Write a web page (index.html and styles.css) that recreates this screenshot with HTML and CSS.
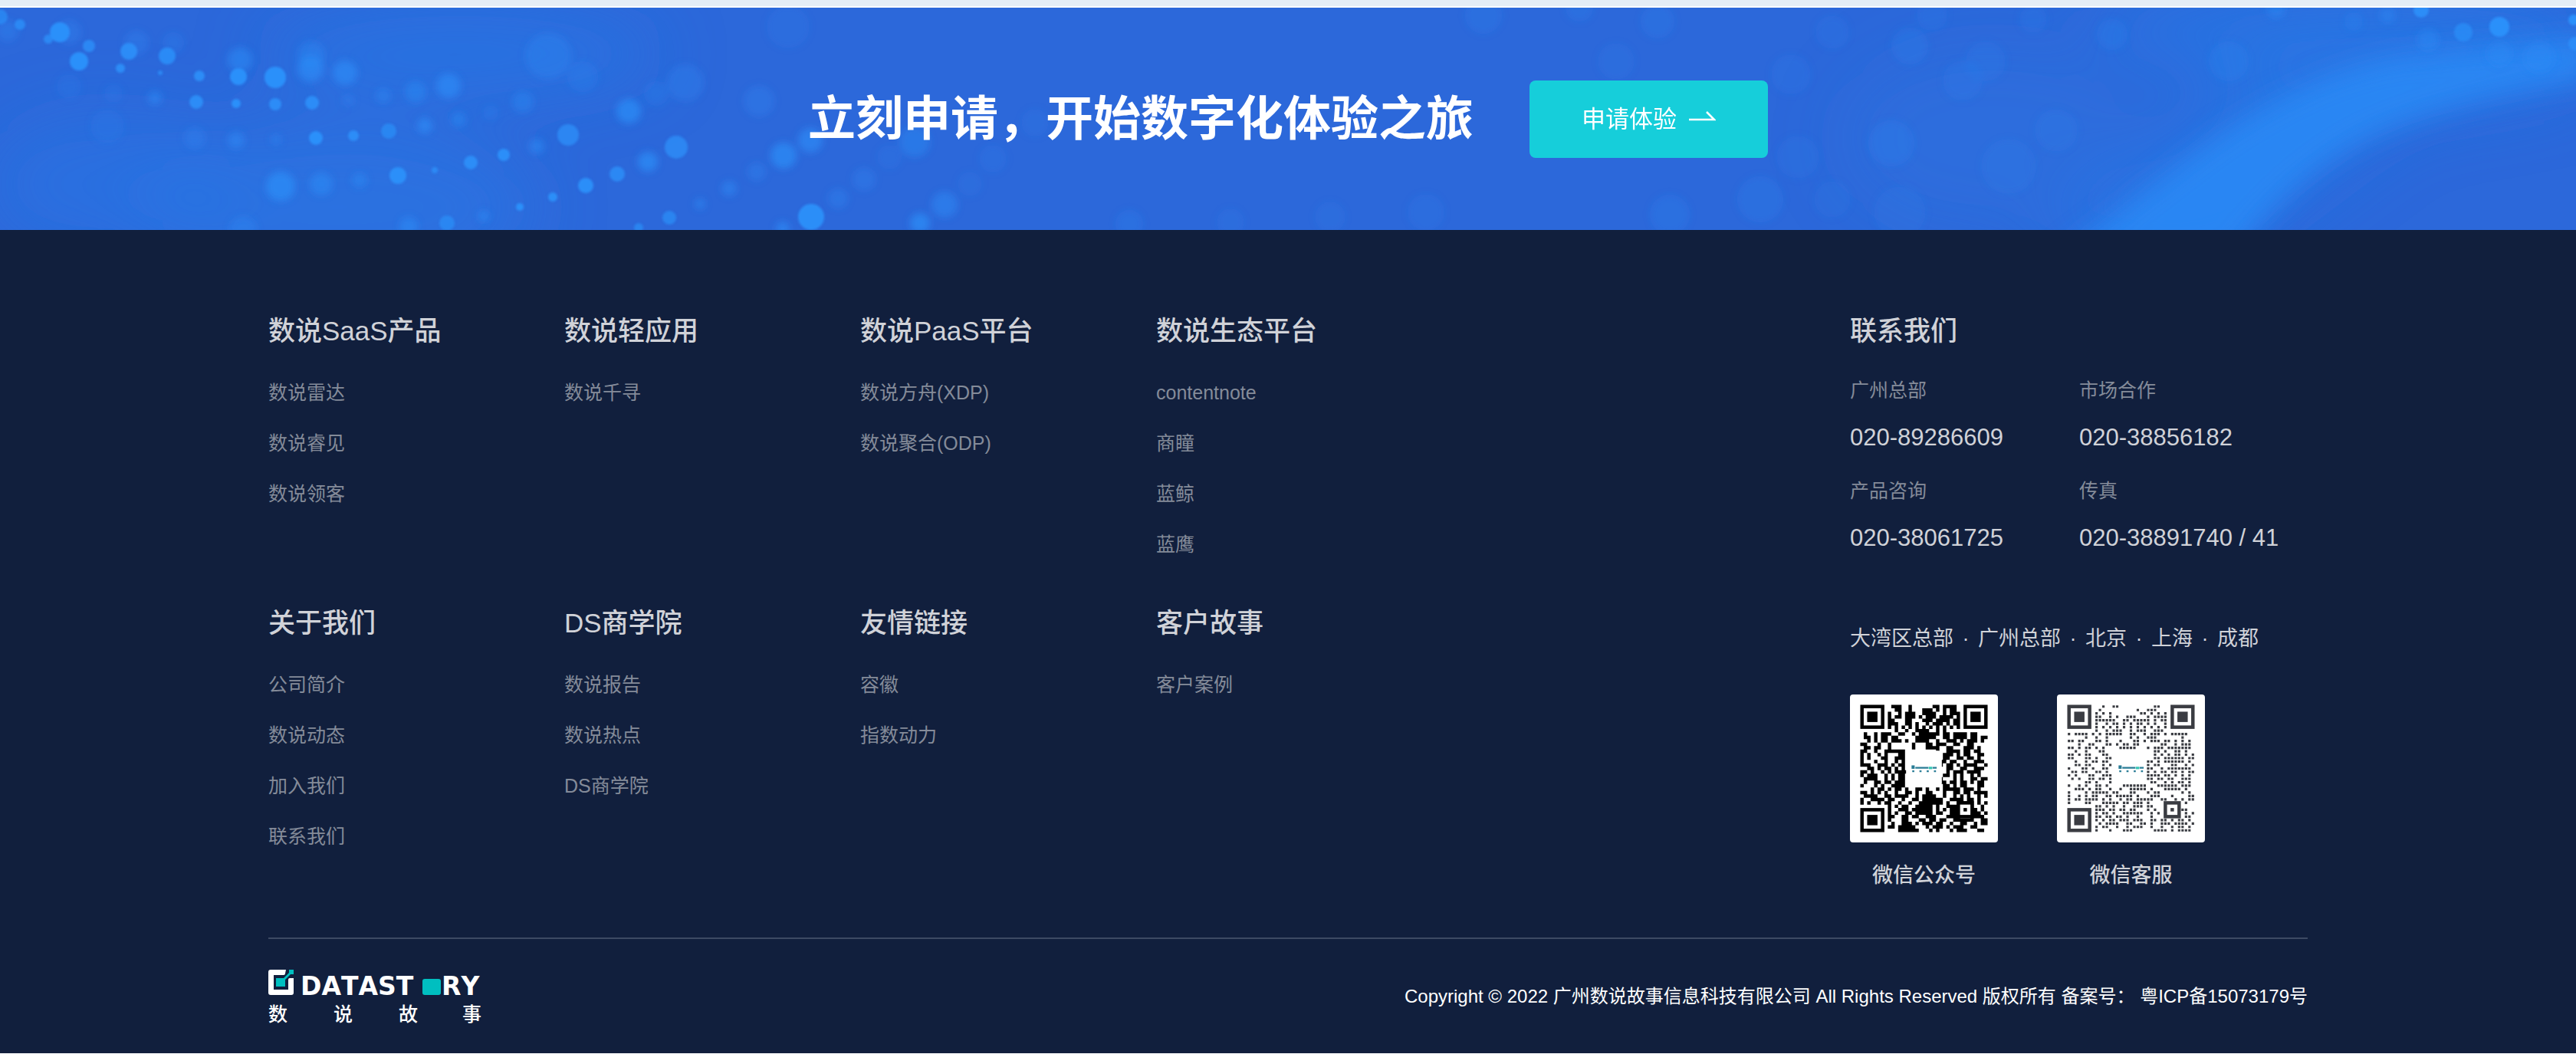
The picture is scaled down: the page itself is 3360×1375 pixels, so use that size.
FILE: index.html
```
<!DOCTYPE html>
<html lang="zh-CN">
<head>
<meta charset="utf-8">
<title>数说故事</title>
<link rel="stylesheet" href="styles.css">
</head>
<body>
<div class="section-edge"></div>
<section class="banner">
  <svg class="banner-art" viewBox="0 10 3360 290" preserveAspectRatio="xMidYMid slice" aria-hidden="true">
    <defs>
      <filter id="soft" x="-30%" y="-30%" width="160%" height="160%"><feGaussianBlur stdDeviation="1.5"/></filter>
      <filter id="blurry" x="-30%" y="-30%" width="160%" height="160%"><feGaussianBlur stdDeviation="5"/></filter>
      <filter id="haze" x="-20%" y="-50%" width="140%" height="200%"><feGaussianBlur stdDeviation="18"/></filter>
      <filter id="glow" x="-20%" y="-50%" width="140%" height="200%"><feGaussianBlur stdDeviation="45"/></filter>
    </defs>
    <g filter="url(#glow)" fill="#2a7ae8">
      <ellipse cx="600" cy="70" rx="260" ry="50" opacity=".6"/>
      <ellipse cx="440" cy="270" rx="260" ry="110" opacity=".5"/>
      <ellipse cx="140" cy="240" rx="160" ry="90" opacity=".4"/>
      <ellipse cx="3060" cy="40" rx="330" ry="60" opacity=".6"/>
      <ellipse cx="2600" cy="180" rx="200" ry="120" opacity=".25"/>
      <path d="M2640 330L2960 60L3360 40V110L3140 150L2900 330Z" opacity=".6"/>
    </g>
    <path d="M2680 340L2860 200Q3000 95 3130 72L3380 48V104Q3200 130 3090 180Q2990 230 2910 340Z" fill="#2b8af6" opacity=".85" filter="url(#haze)"/>
    <g id="dots-far" fill="#2b90fa" filter="url(#blurry)"></g>
    <g id="dots-near" fill="#2b90fa" filter="url(#soft)"></g>
  </svg>
  <div class="banner-content">
    <h2 class="banner-title">立刻申请，开始数字化体验之旅</h2>
    <button class="banner-button" type="button">申请体验
      <svg width="35" height="14" viewBox="0 0 35 14" aria-hidden="true"><path d="M0 11H33L23 1" fill="none" stroke="#fff" stroke-width="2.6"/></svg>
    </button>
  </div>
</section>

<footer class="footer">
  <div class="footer-main">
    <nav class="site-nav">
      <section><h3>数说SaaS产品</h3><ul><li><a href="#">数说雷达</a></li><li><a href="#">数说睿见</a></li><li><a href="#">数说领客</a></li></ul></section>
      <section><h3>数说轻应用</h3><ul><li><a href="#">数说千寻</a></li></ul></section>
      <section><h3>数说PaaS平台</h3><ul><li><a href="#">数说方舟(XDP)</a></li><li><a href="#">数说聚合(ODP)</a></li></ul></section>
      <section><h3>数说生态平台</h3><ul><li><a href="#">contentnote</a></li><li><a href="#">商瞳</a></li><li><a href="#">蓝鲸</a></li><li><a href="#">蓝鹰</a></li></ul></section>
      <section><h3>关于我们</h3><ul><li><a href="#">公司简介</a></li><li><a href="#">数说动态</a></li><li><a href="#">加入我们</a></li><li><a href="#">联系我们</a></li></ul></section>
      <section><h3>DS商学院</h3><ul><li><a href="#">数说报告</a></li><li><a href="#">数说热点</a></li><li><a href="#">DS商学院</a></li></ul></section>
      <section><h3>友情链接</h3><ul><li><a href="#">容徽</a></li><li><a href="#">指数动力</a></li></ul></section>
      <section><h3>客户故事</h3><ul><li><a href="#">客户案例</a></li></ul></section>
    </nav>
    <section class="contact">
      <h3>联系我们</h3>
      <dl class="phones">
        <div><dt>广州总部</dt><dd>020-89286609</dd></div>
        <div><dt>市场合作</dt><dd>020-38856182</dd></div>
        <div><dt>产品咨询</dt><dd>020-38061725</dd></div>
        <div><dt>传真</dt><dd>020-38891740 / 41</dd></div>
      </dl>
      <p class="cities">大湾区总部 <i>·</i> 广州总部 <i>·</i> 北京 <i>·</i> 上海 <i>·</i> 成都</p>
      <div class="codes">
        <figure><svg class="qr" id="qr-account" viewBox="0 0 43 43" role="img" aria-label="微信公众号"></svg><figcaption>微信公众号</figcaption></figure>
        <figure><svg class="qr" id="qr-service" viewBox="0 0 43 43" role="img" aria-label="微信客服"></svg><figcaption>微信客服</figcaption></figure>
      </div>
    </section>
  </div>
  <div class="footer-bottom">
    <a class="logo" href="#" aria-label="DATASTORY 数说故事">
      <svg width="278" height="78" viewBox="0 0 278 78">
        <path d="M23 0H3Q0 0 0 3V30Q0 33 3 33H30Q33 33 33 30V11H28Q26 11 26 13V26H7V7H20Q22 7 22 5Z" fill="#fff"/>
        <path d="M27 0H33V6H29L22 13V22H10V11H20L27 4Z" fill="#00bfc0"/>
        <text class="logo-latin" x="42" y="33">DATAST</text>
        <rect x="201" y="12" width="24" height="21" rx="3" fill="#00bfc0"/>
        <text class="logo-latin" x="226" y="33">RY</text>
        <g class="logo-han"><text x="0" y="67">数</text><text x="85" y="67">说</text><text x="170" y="67">故</text><text x="253" y="67">事</text></g>
      </svg>
    </a>
    <p class="copyright">Copyright © 2022 广州数说故事信息科技有限公司 All Rights Reserved 版权所有 备案号： <a href="#">粤ICP备15073179号</a></p>
  </div>
</footer>
<script src="main.js"></script>
</body>
</html>
```
FILE: styles.css
```
* { box-sizing: border-box; margin: 0; padding: 0; }
body {
  background: #fff;
  color: #d0d2d8;
  font-family: "Liberation Sans", "Noto Sans CJK SC", sans-serif;
}
a { color: inherit; text-decoration: none; }
ul { list-style: none; }

.section-edge { height: 8px; margin-bottom: 2px; background: #e4edf6; }

.banner { position: relative; overflow: hidden; background: #2c68da; }
.banner-art { position: absolute; inset: 0; width: 100%; height: 100%; }
.banner-content {
  position: relative;
  display: flex;
  justify-content: center;
  align-items: center;
  gap: 73px;
  padding: 95px 24px 94px;
}
.banner-title { color: #fff; font-size: 62px; font-weight: 700; line-height: 90px; }
.banner-button {
  display: flex;
  align-items: center;
  gap: 16px;
  padding: 28px 68px;
  border: 0;
  border-radius: 8px;
  background: #16ceda;
  color: #fff;
  font: 31px/45px "Liberation Sans", "Noto Sans CJK SC", sans-serif;
}
.banner-button svg { margin-bottom: 8px; }

.footer { padding: 106px 24px 0; background: #111f3d; }
.footer-main, .footer-bottom { max-width: 2660px; margin: 0 auto; display: flex; }
.footer-main { justify-content: space-between; padding-bottom: 61px; border-bottom: 2px solid #3d4a63; }
.footer h3 { font-size: 35px; font-weight: 500; line-height: 52px; }

.site-nav { display: grid; grid-template-columns: repeat(4, 386px); align-content: start; row-gap: 60px; }
.site-nav ul { display: grid; gap: 32px; margin-top: 37px; }
.site-nav li { color: #848b99; font-size: 25px; line-height: 34px; }

.contact { width: 597px; }
.phones { display: grid; grid-template-columns: 299px 1fr; row-gap: 32px; margin-top: 34px; }
.phones dt { color: #848b99; font-size: 25px; line-height: 34px; }
.phones dd { margin-top: 25px; font-size: 31px; line-height: 40px; }
.cities { margin-top: 91px; font-size: 27px; line-height: 40px; }
.cities i { margin: 0 4px; font-style: normal; }
.codes { display: flex; gap: 77px; margin-top: 53px; }
.codes figure { width: 193px; text-align: center; }
.codes figcaption { margin-top: 23px; font-size: 27px; font-weight: 500; line-height: 40px; }
.qr { display: block; width: 100%; border-radius: 4px; background: #fff; }

.footer-bottom { justify-content: space-between; align-items: flex-start; padding: 40px 0 31px; }
.logo, .logo svg { display: block; }
.logo text { fill: #fff; }
.logo-latin { font: bold 33px "DejaVu Sans", sans-serif; font-kerning: none; }
.logo-han { font: 500 25px "Noto Sans CJK SC", sans-serif; }
.copyright { margin-top: 17px; color: #fff; font-size: 24px; line-height: 36px; }
```
FILE: main.js
```
// Light dots of the banner: x, y, radius, opacity
const dots = [
  [0,22,10,.7],[10,40,14,.3],[26,32,7,.8],[78,42,13,1],[90,42,16,.25],[63,51,6,.8],[116,60,8,.8],[103,80,12,1],[168,67,11,.9],[178,56,16,.25],
  [218,73,11,.85],[226,56,14,.2],[157,89,6,.9],[209,95,3,.8],[260,99,7,.9],[311,100,11,1],[313,78,16,.5],[359,101,14,1],
  [405,90,17,.6],[406,72,18,.35],[202,128,9,.5],[256,133,9,.9],[308,135,6,1],[359,136,8,.9],[407,134,9,.9],[148,122,12,.15],[90,113,16,.15],[140,165,22,.15],[308,183,11,.45],
  [254,180,14,.25],[360,182,7,.35],[412,180,9,1],[366,243,19,.65],[419,240,15,.5],[450,95,16,.6],[585,112,16,.6],
  [542,120,14,.4],[500,125,10,.35],[454,131,8,.25],[461,177,7,.9],[507,171,10,.7],[554,164,10,.6],[598,156,10,.4],[640,147,10,.2],[682,133,14,.35],
  [715,73,30,.3],[519,229,11,.95],[567,222,4,.8],[614,212,9,.9],[657,202,8,.95],[700,191,10,.5],[741,176,14,.75],
  [820,145,16,.65],[469,235,10,.4],[583,291,10,.7],[631,282,7,.55],[678,270,5,1],[721,257,6,.95],[764,242,10,.95],
  [805,227,10,.8],[845,211,13,.65],[882,192,15,.75],[833,297,6,.7],[873,284,9,.7],[913,266,7,.5],[951,246,10,.45],
  [987,224,12,.3],[1022,203,17,.65],[1057,183,16,.6],[1058,283,17,.95],[1021,298,9,.6],[1093,259,13,.3],[1127,234,15,.25],
  [1200,291,13,.65],[1232,267,17,.45],[1193,185,20,.4],[990,132,20,.25],[894,108,24,.25],[856,122,16,.2],[760,100,20,.2],[1160,205,16,.15],
  [1295,207,18,.15],[1265,240,16,.12],[533,295,12,.5],[317,300,18,.3],[1028,35,28,.15],[1350,160,18,.12],[1473,292,18,.2],[1605,290,18,.12],
  [3158,13,10,.9],[3260,35,13,1],[3213,42,12,.7],[3357,26,7,1],[3359,57,9,.8],[2969,12,12,.35],[3114,20,10,.35],[3167,52,14,.35],[3070,28,12,.2],
  [3312,75,20,.3],[3260,70,16,.3],[2755,45,20,.18],[1935,20,24,.18],[2060,10,18,.18],[2390,42,22,.15],[2162,28,22,.18],[2491,60,24,.18],[2520,20,20,.15],[2652,25,18,.15],
  [2336,97,26,.15],[2467,187,30,.2],[2620,217,36,.12],[2296,260,30,.18],[2345,205,28,.12],[1860,277,24,.15],[2178,280,26,.2],[2108,80,24,.12],[2560,105,26,.15],
  [2590,80,26,.15],[2907,80,26,.18],[2478,277,34,.1],[2390,260,24,.1],[1735,283,20,.12],[2682,170,28,.12]
];
const circles = list => list
  .map(([x, y, r, o]) => `<circle cx="${x}" cy="${y}" r="${r}" opacity="${o}"/>`).join("");
document.getElementById("dots-far").innerHTML = circles(dots.filter(d => d[3] < 0.7));
document.getElementById("dots-near").innerHTML = circles(dots.filter(d => d[3] >= 0.7));

// 37 rows of modules; finder squares are drawn apart
const account = [
  ".........###..#......##.####.........",
  "..........##..#...###.#.#.##.........",
  "........#..#.###..####..#.###........",
  "........#.##.###.#.###.####.#........",
  "........##...##...###.####.##........",
  "........###..##.#..#.###.#.##........",
  "........#.#.#.#.#.#.#.#.#.#.#........",
  "..........#..#..####..#.#............",
  ".#..#.###..##..#.######.##.####.##...",
  ".##.#.##.##.....######..##.####.##.##",
  "..#.#.##.###.#..####..#..###.#.###.#.",
  "##...#..#......#...##.###..##..##....",
  ".##.##..#......#...####..##...###.#..",
  "##..#..######.........#..####.##.##..",
  "#.#..#.#...##...........###.#.##..##.",
  "#.#...##..###...........##..##.##.#..",
  "#...#..#..#.#..........##.##..#..###.",
  "###..###.#.##..........#.##.#.####..#",
  "..##.#.##.#.#............##..##..###.",
  "##.#..#.#.####...........#.###.####..",
  "#.###..#.#.##...........##.#.#..#.#..",
  ".####..#.#.##..........#...#.#..##.##",
  ".#..##.##.###..........##.##.##.#.##.",
  "#...#.#..####...........##.#.##...##.",
  "...#.##.#.##.#..##.#..#.#####.###.#..",
  "##.#.#.#..#..##.#..##...#..##.##.####",
  ".####..##.####..#.####..#..#.#.#..#.#",
  "#..####.##..#..##.######..####.##.#..",
  "#.#..#.##..#..#..#######.#..#####.#.#",
  "........#.#.##..#####.#..####..##..#.",
  "........#..###.######.#.#.###...##.#.",
  "........#.#..##.#####.##..###.#.###.#",
  "........##..##.##..###...####...####.",
  "........#...##...##.##.##..######..##",
  ".........#..###.#.###.##..#..##..#.##",
  "........##.#####...#.###.#.###..##...",
  "...........######...#.#...#.###...##."
];
const service = [
  "..........#..##..........##..........",
  ".........#..........#..###...........",
  "........#.#.#........##.#.#.#........",
  "........##..#.#..###...#.####........",
  "........######..##.#####.#.##........",
  "........#..#.##.#.#.##.#.#..#........",
  "........#.#.#.#.#.#.#.#.#.#.#........",
  "........#..#.###..#.###..###.........",
  "#.####.#.#.#####..##..#.###.#.#####..",
  ".....#..#..#......#.#..###.......#...",
  "##.##...##.#...#...##.#.###.##.#.#.#.",
  "...#..##...##.#.##.##......##..#.###.",
  "##.#.##.#.#....#####...#.###.#######.",
  "..#..#...##..............##.#..##.#..",
  "##.#.##...##.............#.#.#.##.#.#",
  "##...##.#..##............##.######.##",
  "..#..#.##.##...........##.#.######.#.",
  "..##.##...#.#..........#.##...##..#.#",
  "#...##.#..##...........##..#.#######.",
  ".##.##..##.#...........#.#.##.##.#.##",
  "#.#...##..###..........####.##.#.#.#.",
  ".#.#..##.##.#..........##.##.##..###.",
  ".....##.#...#...........##..#.#.##.#.",
  "#..#.#..##.#....#######...######.###.",
  "..###.#.##..#..#..#####.#...#####.#..",
  "#....#.#####.##...##...#.##......#.#.",
  "#..#.#.##..##.#####.#...###...#....##",
  "#.##.####.#.#..#.##.#####..##..#.#.##",
  "#....##...#####.##.###.#..........#..",
  "........##.#.#..#..###.##............",
  "........###.##.##.##...#.#.......##..",
  "........#.##.#..######..#.#.......#.#",
  "........##.##.##.#..#...#.........##.",
  "........#.#.##.###.###..##.##.#.##.#.",
  ".........#.####..##..##.#..###.####.#",
  "........#.##..#..#.###..#..#..#.##.#.",
  "........#...#...###......####.#.####."
];

function drawCode(id, rows, color, size, hollow) {
  const inset = (1 - size) / 2;
  let path = "";
  rows.forEach((row, y) => [...row].forEach((cell, x) => {
    if (cell === "#") path += `M${x + 3 + inset} ${y + 3 + inset}h${size}v${size}h-${size}z`;
  }));
  const square = (x, y, n) => `<rect x="${x}" y="${y}" width="${n}" height="${n}" fill="${color}"/>` +
    `<rect x="${x + 1}" y="${y + 1}" width="${n - 2}" height="${n - 2}" fill="#fff"/>` +
    `<rect x="${x + 2}" y="${y + 2}" width="${n - 4}" height="${n - 4}" fill="${color}"/>`;
  document.getElementById(id).innerHTML =
    `<path d="${path}" fill="${color}"/>` +
    square(3, 3, 7) + square(33, 3, 7) + square(3, 33, 7) + square(31, 31, 5) +
    `<rect x="${hollow}" y="${hollow}" width="${43 - 2 * hollow}" height="${43 - 2 * hollow}" rx="1" fill="#fff"/>` +
    `<rect x="17.9" y="20.6" width="0.9" height="1" fill="#2a7d96"/>` +
    `<path d="M19 21.3h3.8M18.1 22.3h.6M20.2 22.3h.6M22.3 22.3h.6M24.4 22.3h.6M24 21.3h1.2" stroke="#2a7d96" stroke-width=".5"/>` +
    `<rect x="22.9" y="21" width="1" height=".7" fill="#35c6b4"/>`;
}
drawCode("qr-account", account, "#000", 1, 16.3);
drawCode("qr-service", service, "#3a3c42", 0.7, 17);
```
